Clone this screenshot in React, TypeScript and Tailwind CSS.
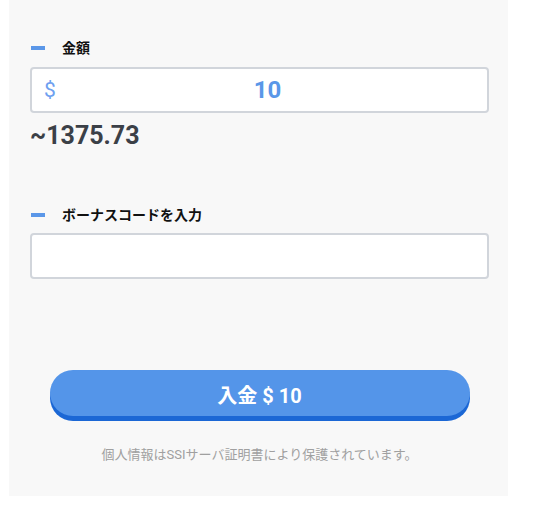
const font = { fontFamily: 'Roboto, "Noto Sans CJK JP", sans-serif' };

function Label({ text }: { text: string }) {
  return (
    <div className="flex items-center h-[20px]">
      <span className="ml-[1px] w-[14px] h-[4px] bg-[#5b97e8]" />
      <span className="ml-[17px] text-[14px] font-bold text-[#111] leading-[20px]">{text}</span>
    </div>
  );
}

export default function App() {
  return (
    <div className="w-[534px] h-[511px] bg-white" style={font}>
      <div className="ml-[9px] w-[499px] h-[496px] bg-[#f8f8f8] pt-[38px] pl-[21px] pr-[19px] flex flex-col">
        {/* Amount */}
        <Label text="金額" />
        <div className="mt-[9px] h-[46px] flex items-center bg-white border-2 border-[#d1d5db] rounded-[4px]">
          <span className="pl-[12px] w-[22px] text-[21px] text-[#6ea0f0] leading-none">$</span>
          <input
            readOnly
            value="10"
            className="flex-1 min-w-0 pr-[6px] text-center text-[24px] font-bold text-[#5a97e8] bg-transparent outline-none"
            style={font}
          />
        </div>
        <div className="mt-[9px] h-[28px] text-[25px] font-bold text-[#3b4047] leading-[28px]">~1375.73</div>

        {/* Bonus code */}
        <div className="mt-[55px]">
          <Label text="ボーナスコードを入力" />
        </div>
        <div className="mt-[8px] h-[46px] bg-white border-2 border-[#d1d5db] rounded-[4px]">
          <input className="w-full h-full px-3 bg-transparent outline-none" style={font} />
        </div>

        {/* Deposit */}
        <button className="mt-[91px] mx-auto w-[420px] h-[46px] shrink-0 pt-[5px] rounded-full bg-[#5495e9] shadow-[0_5px_0_#1b67d5] text-white text-[20px] font-bold leading-none">
          入金 $ 10
        </button>
        <p className="mt-[29px] text-center text-[13px] leading-[20px] text-[#a0a0a0]">
          個人情報はSSIサーバ証明書により保護されています。
        </p>
      </div>
    </div>
  );
}
